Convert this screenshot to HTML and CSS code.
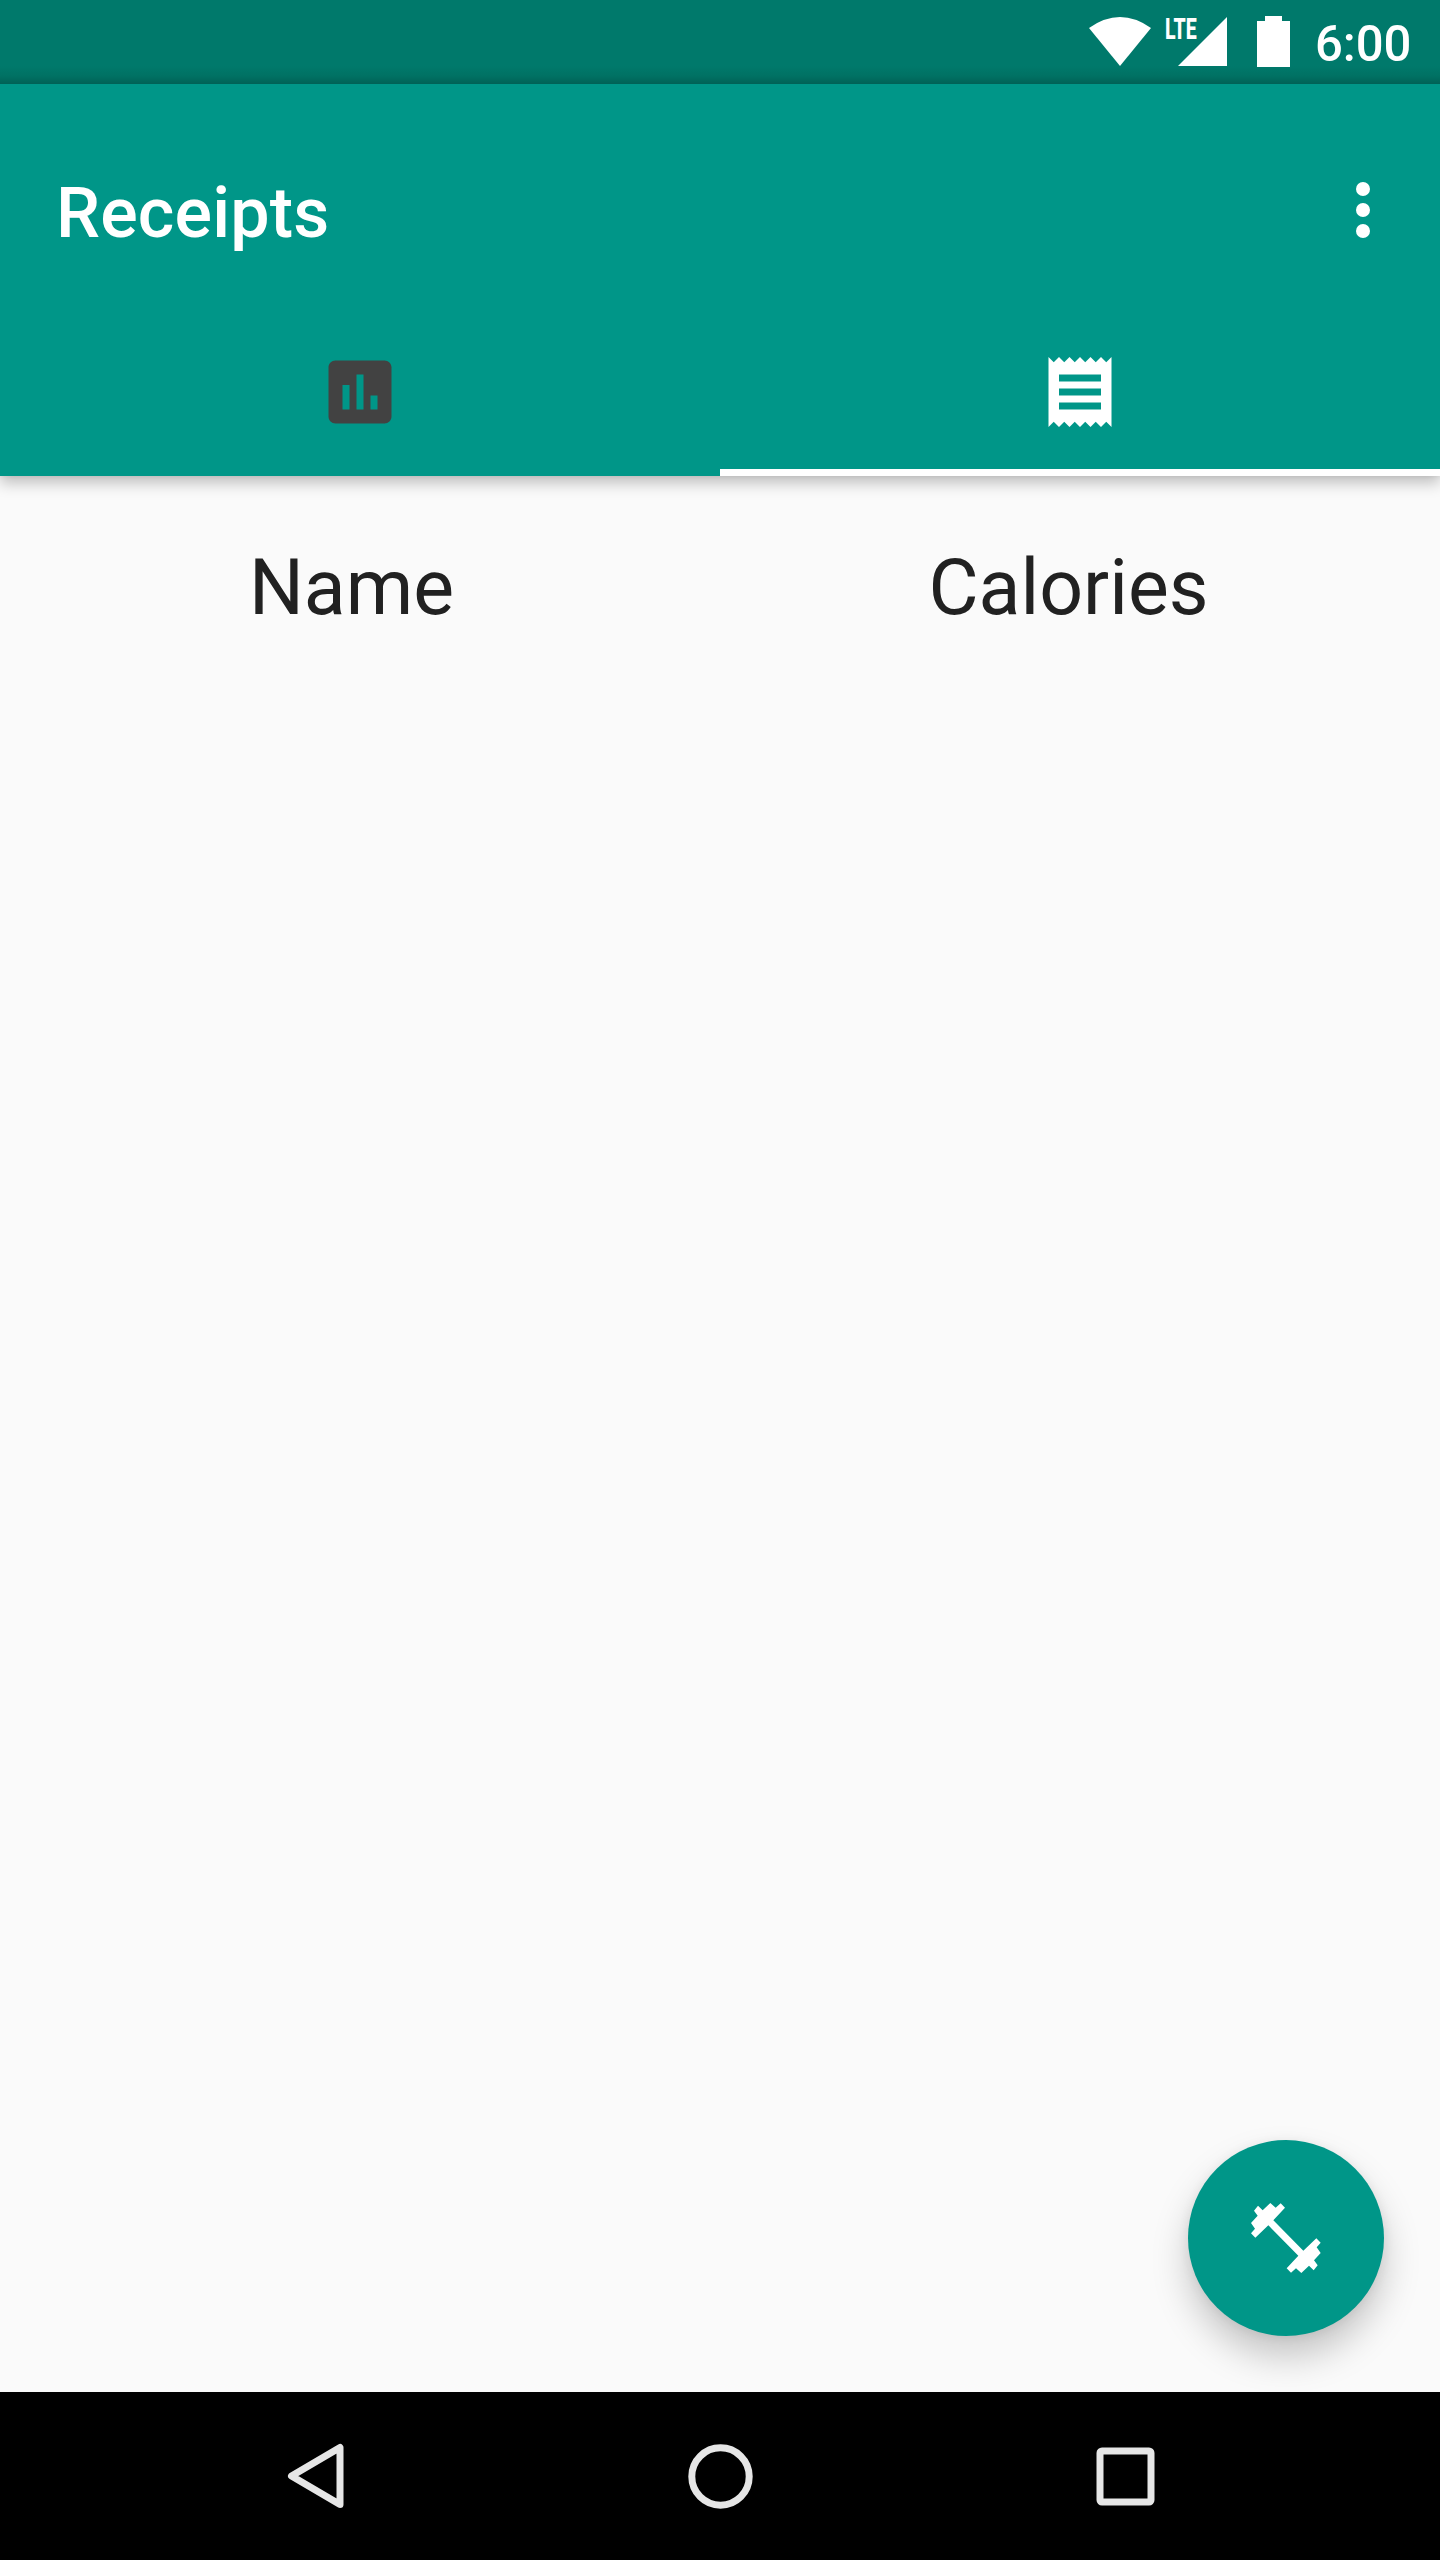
FILE: index.html
```html
<!DOCTYPE html>
<html lang="en">
<head>
<meta charset="utf-8">
<title>Receipts</title>
<link rel="stylesheet" href="styles.css">
</head>
<body>
<div class="screen">
  <header class="app-bar">
    <div class="status-bar">
      <svg class="wifi" viewBox="0 0 62 49"><path d="M0 11Q31 -11 62 11L31 49z"/></svg>
      <div class="signal">
        <svg viewBox="0 0 49 49"><path d="M49 0v49H0z"/></svg>
        <span class="network">LTE</span>
      </div>
      <svg class="battery" viewBox="0 0 33 51"><path d="M8 0h17v5h8v46H0V5h8z"/></svg>
      <span class="clock">6:00</span>
    </div>
    <div class="toolbar">
      <h1 class="title">Receipts</h1>
      <svg class="overflow" viewBox="0 0 14 56"><circle cx="7" cy="7" r="7"/><circle cx="7" cy="28" r="7"/><circle cx="7" cy="49" r="7"/></svg>
    </div>
    <nav class="tabs">
      <div class="tab">
        <svg class="tab-icon" viewBox="0 0 24 24"><path d="M19 3H5c-1.100 0-2 .9-2 2v14c0 1.100.9 2 2 2h14c1.100 0 2-.9 2-2V5c0-1.100-.9-2-2-2zM9 17H7v-7h2v7zm4 0h-2V7h2v10zm4 0h-2v-4h2v4z"/></svg>
      </div>
      <div class="tab tab-active">
        <svg class="tab-icon" viewBox="0 0 24 24"><path d="M18 17H6v-2h12v2zm0-4H6v-2h12v2zm0-4H6V7h12v2zM3 22l1.500-1.500L6 22l1.500-1.500L9 22l1.500-1.500L12 22l1.500-1.500L15 22l1.500-1.500L18 22l1.500-1.500L21 22V2l-1.500 1.500L18 2l-1.500 1.500L15 2l-1.500 1.500L12 2l-1.500 1.500L9 2 7.500 3.500 6 2 4.500 3.500 3 2v20z"/></svg>
      </div>
    </nav>
  </header>
  <main class="content">
    <div class="table-head">
      <span>Name</span>
      <span>Calories</span>
    </div>
    <div class="fab">
      <svg viewBox="64 69 210 210"><path d="M153 70L166 83L131 121L221 212L260 175L273 188L261 202L273 219L253 241L264 256L252 271L238 257L215 279L199 265L184 278L171 265L206 227L116 136L77 173L64 160L76 146L64 129L84 107L73 92L85 77L99 91L122 69L138 83z"/></svg>
    </div>
  </main>
  <footer class="nav-bar">
    <svg class="nav-back" viewBox="0 0 57 66"><path d="M53 4.500v57L4.500 33z"/></svg>
    <svg class="nav-home" viewBox="0 0 65 65"><circle cx="32.500" cy="32.500" r="28.700"/></svg>
    <svg class="nav-recents" viewBox="0 0 59 59"><rect x="4" y="4" width="51" height="51" rx="2"/></svg>
  </footer>
</div>
</body>
</html>
```
FILE: styles.css
```css
body {
  margin: 0;
  font-family: Roboto, sans-serif;
}

svg {
  display: block;
  fill: currentColor;
}

.screen {
  display: flex;
  flex-direction: column;
  width: 1440px;
  height: 2560px;
  background: #fafafa;
  overflow: hidden;
}

.app-bar {
  position: relative;
  z-index: 1;
  height: 476px;
  background: #009688;
  color: #fff;
  box-shadow: 0 7px 14px rgba(0, 0, 0, 0.24), 0 0 5px rgba(0, 0, 0, 0.08);
}

.status-bar {
  box-sizing: border-box;
  display: flex;
  align-items: flex-start;
  justify-content: flex-end;
  height: 84px;
  padding: 16px 28px 0 0;
  background: linear-gradient(#00796b 66px, #007163 76px, #006156 84px);
}

.wifi {
  width: 62px;
  height: 49px;
  margin: 1px 27px 0 0;
}

.signal {
  position: relative;
  width: 49px;
  margin: 1px 30px 0 0;
}

.network {
  position: absolute;
  left: -13px;
  top: 1px;
  font-size: 30px;
  line-height: 21px;
  font-weight: 800;
  transform: scaleX(0.65);
  transform-origin: 0 0;
}

.battery {
  width: 33px;
  height: 51px;
  margin-right: 25px;
}

.clock {
  width: 97px;
  font-size: 50px;
  line-height: 57px;
  font-weight: 500;
  white-space: nowrap;
  transform: scaleX(0.98);
  transform-origin: 0 0;
}

.toolbar {
  display: flex;
  align-items: center;
  justify-content: space-between;
  height: 196px;
  margin-top: 28px;
  padding: 0 70px 0 56px;
}

.title {
  margin: 6px 0 0;
  font-size: 70px;
  line-height: 82px;
  font-weight: 500;
  letter-spacing: 0.15px;
}

.overflow {
  width: 14px;
  height: 56px;
}

.tabs {
  display: grid;
  grid-template-columns: 1fr 1fr;
  height: 168px;
}

.tab {
  display: flex;
  align-items: center;
  justify-content: center;
  color: #424242;
}

.tab-active {
  color: #fff;
  box-shadow: inset 0 -7px #fff;
}

.tab-icon {
  width: 84px;
  height: 84px;
}

.content {
  flex: 1;
  display: flex;
  flex-direction: column;
  justify-content: space-between;
}

.table-head {
  display: grid;
  grid-template-columns: 703px 731px;
  padding-top: 67px;
  color: #212121;
  font-size: 77px;
  line-height: 90px;
  text-align: center;
}

.fab {
  display: flex;
  align-items: center;
  justify-content: center;
  align-self: flex-end;
  width: 196px;
  height: 196px;
  margin: 0 56px 56px 0;
  border-radius: 50%;
  background: #009688;
  color: #fff;
  box-shadow: 0 21px 36px rgba(0, 0, 0, 0.21), 0 2px 12px rgba(0, 0, 0, 0.07);
}

.fab svg {
  width: 70px;
  height: 70px;
}

.nav-bar {
  position: relative;
  display: flex;
  align-items: center;
  height: 168px;
  background: #000;
}

.nav-bar svg {
  fill: none;
  stroke: #e6e6e6;
  stroke-width: 7;
  stroke-linejoin: round;
}

.nav-back {
  width: 57px;
  height: 66px;
  margin-left: 287px;
}

.nav-home {
  width: 65px;
  height: 65px;
  margin-left: 344px;
}

.nav-recents {
  width: 59px;
  height: 59px;
  margin-left: 343px;
}
```
